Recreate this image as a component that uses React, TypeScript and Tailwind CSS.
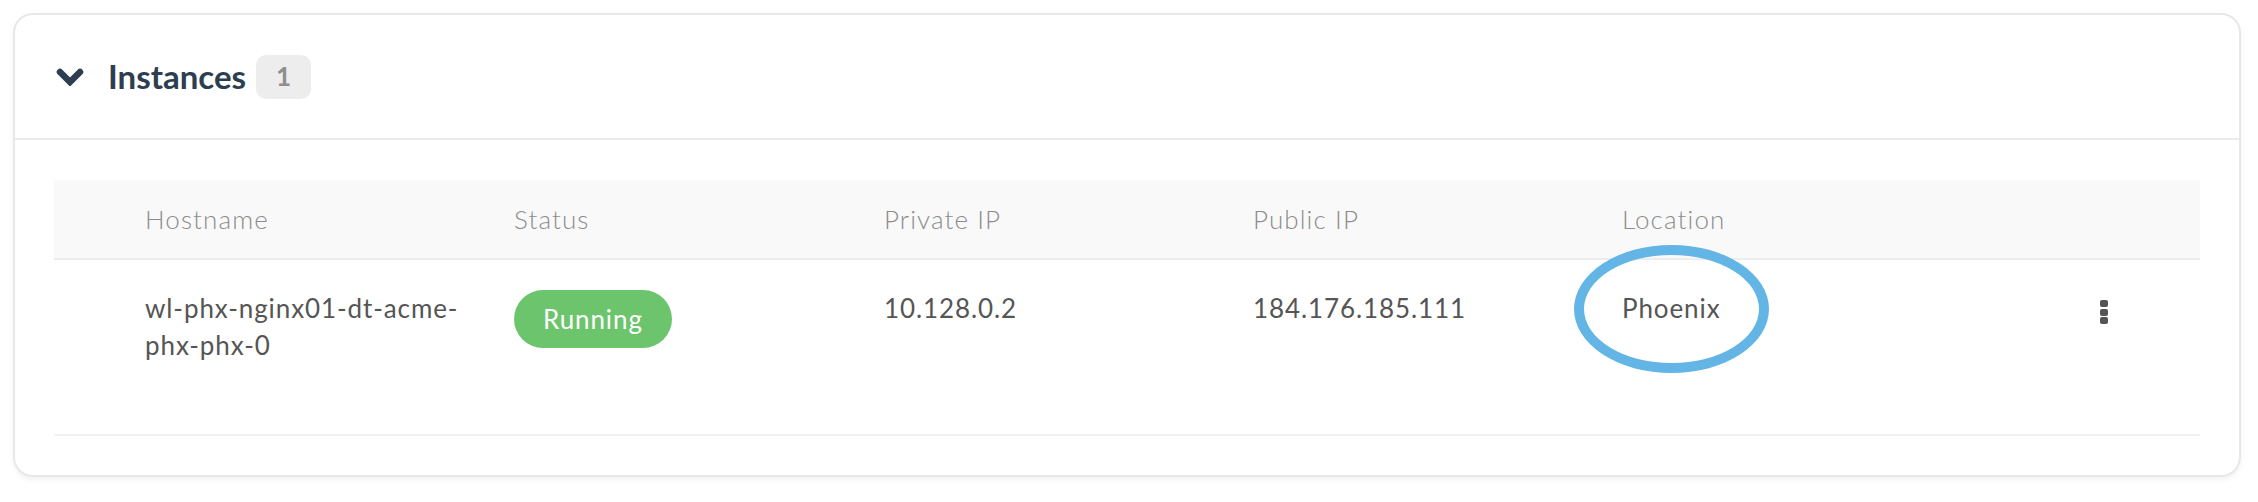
import React from "react";

const headers = ["Hostname", "Status", "Private IP", "Public IP", "Location"];

export default function App() {
  return (
    <div className="w-[2258px] h-[502px] bg-white pl-[13px] pr-[17px] pt-[13px] font-['Lato','Open_Sans',sans-serif]">
      <div className="rounded-[20px] border-2 border-[#e8e8e8] bg-white shadow-[0_3px_5px_rgba(0,0,0,0.05)]">
        {/* Header */}
        <div className="flex h-[125px] items-center border-b-2 border-[#ececec] pl-[41px]">
          <svg width="28" height="18" viewBox="0 0 28 18" className="shrink-0">
            <path d="M4 4 L14 14 L24 4" fill="none" stroke="#2d3e50" strokeWidth="6.5" strokeLinecap="round" strokeLinejoin="miter" />
          </svg>
          <span className="ml-[24px] text-[33px] font-bold leading-none text-[#2d3e50]">Instances</span>
          <span className="ml-[10px] flex h-[44px] w-[55px] items-center justify-center rounded-[10px] bg-[#ededed] text-[26px] font-bold text-[#8e8e8e]">1</span>
        </div>

        {/* Table */}
        <div className="px-[39px] pt-[40px] pb-[39px]">
          <div className="grid h-[80px] grid-cols-[91px_369px_370px_369px_369px_369px_1fr] items-center border-b-2 border-[#ededed] bg-[#f9f9f9] text-[26px] font-light tracking-[1.1px] text-[#8c8c8c]">
            <div />
            {headers.map((h) => (
              <div key={h}>{h}</div>
            ))}
            <div />
          </div>
          <div className="grid h-[176px] grid-cols-[91px_369px_370px_369px_369px_369px_1fr] items-start border-b-2 border-[#f2f2f2] pt-[30px] text-[26px] leading-[37px] tracking-[0.9px] text-[#555555]">
            <div />
            <div className="pr-[40px]">wl-phx-nginx01-dt-acme-phx-phx-0</div>
            <div>
              <span className="inline-flex h-[58px] items-center rounded-full bg-[#6cc56d] px-[29px] text-white">Running</span>
            </div>
            <div>10.128.0.2</div>
            <div>184.176.185.111</div>
            <div className="relative">
              <span>Phoenix</span>
              <div className="absolute left-[-48px] top-[-45px] h-[128px] w-[195px] rounded-[50%] border-[10px] border-[#62b5e4]" />
            </div>
            <div className="flex flex-col gap-[1.5px] pl-[109px] pt-[10px]">
              <span className="h-[7px] w-[8px] rounded-[2px] bg-[#555555]" />
              <span className="h-[7px] w-[8px] rounded-[2px] bg-[#555555]" />
              <span className="h-[7px] w-[8px] rounded-[2px] bg-[#555555]" />
            </div>
          </div>
        </div>
      </div>
    </div>
  );
}
